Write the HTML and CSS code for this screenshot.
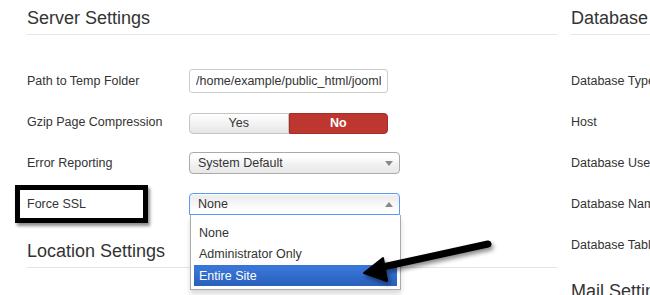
FILE: index.html
```html
<!DOCTYPE html>
<html>
  <head>
    <meta charset="UTF-8" />
    <title>Global Configuration</title>
    <link rel="stylesheet" href="styles.css">
  </head>
  <body>
    <div class="page">
      <section class="col col-main">
        <h3 class="heading">Server Settings</h3>
        <div class="fields">
          <div class="row">
            <label>Path to Temp Folder</label>
            <input class="text" type="text" value="/home/example/public_html/joomla/tmp" readonly>
          </div>
          <div class="row">
            <label>Gzip Page Compression</label>
            <div class="toggle">
              <span class="toggle-btn">Yes</span>
              <span class="toggle-btn is-no">No</span>
            </div>
          </div>
          <div class="row">
            <label>Error Reporting</label>
            <div class="select">
              <span>System Default</span>
              <i class="caret"></i>
            </div>
          </div>
          <div class="row">
            <span class="callout"></span>
            <label>Force SSL</label>
            <div class="select is-open">
              <span>None</span>
              <i class="caret caret-up"></i>
              <ul class="dropdown">
                <li>None</li>
                <li>Administrator Only</li>
                <li class="is-active">Entire Site</li>
              </ul>
            </div>
          </div>
        </div>
        <h3 class="heading heading-next">Location Settings</h3>
      </section>

      <section class="col col-side">
        <h3 class="heading">Database Settings</h3>
        <div class="fields">
          <div class="row"><label>Database Type</label></div>
          <div class="row"><label>Host</label></div>
          <div class="row"><label>Database Username</label></div>
          <div class="row"><label>Database Name</label></div>
          <div class="row"><label>Database Tables Prefix</label></div>
        </div>
        <h3 class="heading heading-mail">Mail Settings</h3>
      </section>

      <svg class="arrow" width="650" height="295" viewBox="0 0 650 295">
        <line x1="488" y1="244" x2="378" y2="268" stroke="#000" stroke-width="7" stroke-linecap="round" />
        <polygon points="364,273 383,258 387,281" fill="#000" stroke="#000" stroke-width="2" stroke-linejoin="round" />
      </svg>
    </div>
  </body>
</html>
```

FILE: styles.css
```css
:root {
  --color-text: #333;
  --color-line: #e5e5e5;
  --color-border: #aaa;
  --color-red: #bd362f;
  --color-blue: #3875d7;
  --font-family: "Liberation Sans", Arial, sans-serif;
}

* {
  box-sizing: border-box;
  margin: 0;
  padding: 0;
}

body {
  background-color: #fff;
  color: var(--color-text);
  font-family: var(--font-family);
  font-size: 12.5px;
  overflow: hidden;
  width: 650px;
  height: 295px;
}

.page {
  display: flex;
  column-gap: 14px;
  padding-left: 27px;
  position: relative;
}

.col-main {
  flex: 0 0 530px;
}

.col-side {
  flex: 0 0 200px;
  white-space: nowrap;
}

.heading {
  border-bottom: 1px solid var(--color-line);
  font-size: 18px;
  font-weight: normal;
  line-height: 20px;
  margin-top: 8px;
  padding-bottom: 6px;
}

.heading-next {
  margin-top: 17px;
}

.heading-mail {
  border-bottom: none;
  margin-top: 16px;
}

.fields {
  display: flex;
  flex-direction: column;
  margin-top: 25px;
}

.row {
  align-items: center;
  display: flex;
  height: 41px;
  position: relative;
}

.row > label {
  flex: 0 0 162px;
}

.text {
  border: 1px solid #ccc;
  border-radius: 3px;
  color: var(--color-text);
  font-family: var(--font-family);
  font-size: 12.5px;
  height: 24px;
  outline: none;
  padding: 0 6px;
  width: 199px;
}

.toggle {
  display: flex;
  margin-top: 4px;
  width: 199px;
}

.toggle-btn {
  background: linear-gradient(#fff, #e6e6e6);
  border: 1px solid #c5c5c5;
  border-radius: 4px 0 0 4px;
  flex: 1;
  height: 21px;
  line-height: 19px;
  text-align: center;
}

.toggle-btn.is-no {
  background: var(--color-red);
  border-color: #a52d27;
  border-radius: 0 4px 4px 0;
  color: #fff;
  font-weight: bold;
}

.select {
  background: linear-gradient(#fff 20%, #f0f0f0 60%, #e8e8e8);
  border: 1px solid var(--color-border);
  border-radius: 4px;
  height: 22px;
  line-height: 20px;
  padding-left: 8px;
  position: relative;
  width: 211px;
}

.select.is-open {
  background: linear-gradient(#eee 20%, #fff 80%);
  border-color: #5897fb;
  border-radius: 4px 4px 0 0;
  box-shadow: 0 1px 0 #fff inset;
}

.caret {
  border-left: 4px solid transparent;
  border-right: 4px solid transparent;
  border-top: 5px solid #888;
  position: absolute;
  right: 6px;
  top: 8px;
}

.caret-up {
  border-bottom: 5px solid #888;
  border-top: none;
}

.dropdown {
  background: #fff;
  border: 1px solid var(--color-border);
  border-top: none;
  box-shadow: 0 4px 5px rgb(0 0 0 / 15%);
  left: 0;
  list-style-type: none;
  padding: 7px 3px 3px;
  position: absolute;
  top: 21px;
  width: 211px;
  z-index: 2;
}

.dropdown > li {
  height: 21.5px;
  line-height: 22px;
  padding-left: 5px;
}

.dropdown > li.is-active {
  background: linear-gradient(var(--color-blue) 20%, #2a62bc 90%);
  color: #fff;
}

.callout {
  border: 5px solid #000;
  box-shadow: 2px 3px 3px rgb(0 0 0 / 45%);
  height: 38px;
  left: -12px;
  position: absolute;
  top: 2px;
  width: 133px;
}

.arrow {
  filter: drop-shadow(2px 3px 2px rgb(0 0 0 / 45%));
  left: 0;
  pointer-events: none;
  position: absolute;
  top: 0;
  z-index: 3;
}
```
